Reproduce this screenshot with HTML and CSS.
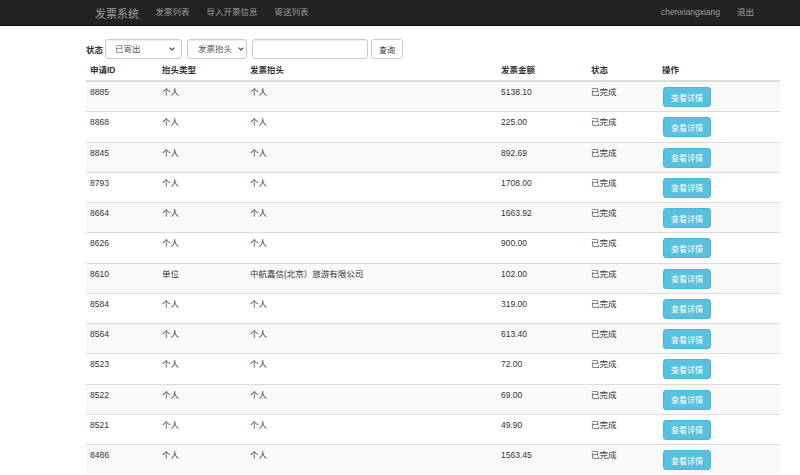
FILE: index.html
```html
<!DOCTYPE html>
<html lang="zh">
<head>
<meta charset="utf-8">
<title>发票系统</title>
<link rel="stylesheet" href="styles.css">
</head>
<body>
<nav class="navbar">
  <div class="nav-left">
    <span class="brand">发票系统</span>
    <a class="nav-link">发票列表</a>
    <a class="nav-link">导入开票信息</a>
    <a class="nav-link">寄送列表</a>
  </div>
  <div class="nav-right">
    <a class="nav-link">chenxiangxiang</a>
    <a class="nav-link">退出</a>
  </div>
</nav>
<main class="container">
  <form class="filter">
    <label class="filter-label">状态</label>
    <span class="select-wrap sel-status">
      <select class="select"><option>已寄出</option></select>
      <svg class="caret" width="6" height="4" viewBox="0 0 6 4"><path d="M0.6 0.6 L3 3 L5.4 0.6" fill="none" stroke="#444" stroke-width="1.1"/></svg>
    </span>
    <span class="select-wrap sel-title">
      <select class="select"><option>发票抬头</option></select>
      <svg class="caret" width="6" height="4" viewBox="0 0 6 4"><path d="M0.6 0.6 L3 3 L5.4 0.6" fill="none" stroke="#444" stroke-width="1.1"/></svg>
    </span>
    <input class="text-input" type="text">
    <button class="btn-query" type="button">查询</button>
  </form>
  <table class="table">
    <colgroup>
      <col class="c1"><col class="c2"><col class="c3"><col class="c4"><col class="c5"><col class="c6">
    </colgroup>
    <thead>
      <tr><th>申请ID</th><th>抬头类型</th><th>发票抬头</th><th>发票金额</th><th>状态</th><th>操作</th></tr>
    </thead>
    <tbody>
      <tr><td>8885</td><td>个人</td><td>个人</td><td>5138.10</td><td>已完成</td><td><button class="btn-info" type="button">查看详情</button></td></tr>
      <tr><td>8868</td><td>个人</td><td>个人</td><td>225.00</td><td>已完成</td><td><button class="btn-info" type="button">查看详情</button></td></tr>
      <tr><td>8845</td><td>个人</td><td>个人</td><td>892.69</td><td>已完成</td><td><button class="btn-info" type="button">查看详情</button></td></tr>
      <tr><td>8793</td><td>个人</td><td>个人</td><td>1708.00</td><td>已完成</td><td><button class="btn-info" type="button">查看详情</button></td></tr>
      <tr><td>8664</td><td>个人</td><td>个人</td><td>1663.92</td><td>已完成</td><td><button class="btn-info" type="button">查看详情</button></td></tr>
      <tr><td>8626</td><td>个人</td><td>个人</td><td>900.00</td><td>已完成</td><td><button class="btn-info" type="button">查看详情</button></td></tr>
      <tr><td>8610</td><td>单位</td><td>中航嘉信(北京）旅游有限公司</td><td>102.00</td><td>已完成</td><td><button class="btn-info" type="button">查看详情</button></td></tr>
      <tr><td>8584</td><td>个人</td><td>个人</td><td>319.00</td><td>已完成</td><td><button class="btn-info" type="button">查看详情</button></td></tr>
      <tr><td>8564</td><td>个人</td><td>个人</td><td>613.40</td><td>已完成</td><td><button class="btn-info" type="button">查看详情</button></td></tr>
      <tr><td>8523</td><td>个人</td><td>个人</td><td>72.00</td><td>已完成</td><td><button class="btn-info" type="button">查看详情</button></td></tr>
      <tr><td>8522</td><td>个人</td><td>个人</td><td>69.00</td><td>已完成</td><td><button class="btn-info" type="button">查看详情</button></td></tr>
      <tr><td>8521</td><td>个人</td><td>个人</td><td>49.90</td><td>已完成</td><td><button class="btn-info" type="button">查看详情</button></td></tr>
      <tr><td>8486</td><td>个人</td><td>个人</td><td>1563.45</td><td>已完成</td><td><button class="btn-info" type="button">查看详情</button></td></tr>
    </tbody>
  </table>
</main>
</body>
</html>
```
FILE: styles.css
```css
html { overflow: hidden; }
body {
  margin: 0;
  font-family: "Liberation Sans", "Noto Sans CJK SC", sans-serif;
  font-size: 8.5px;
  color: #333;
  background: #fff;
}
.navbar {
  height: 25px;
  background: #222;
  border-bottom: 1px solid #080808;
  display: flex;
  justify-content: space-between;
  align-items: center;
  padding: 0 38px 0 95px;
}
.nav-left, .nav-right { display: flex; align-items: center; }
.brand {
  font-size: 11px;
  color: #9d9d9d;
  margin-right: 8px;
}
.nav-link {
  color: #9d9d9d;
  padding: 0 8.5px;
  line-height: 25px;
}
.nav-right .nav-link:last-child { padding-right: 8px; }
.container {
  padding: 0 20px 0 86px;
}
.filter {
  display: flex;
  align-items: center;
  margin-top: 13px;
  height: 20px;
}
.filter-label {
  font-weight: bold;
  margin-right: 2px;
}
.select-wrap {
  position: relative;
  display: inline-block;
  height: 20px;
  margin-right: 5px;
}
.select {
  -webkit-appearance: none;
  appearance: none;
  height: 20px;
  box-sizing: border-box;
  border: 1px solid #ccc;
  border-radius: 3px;
  background: #fff;
  color: #555;
  font-family: inherit;
  font-size: 8.5px;
  padding: 0 0 0 9px;
  box-shadow: inset 0 1px 1px rgba(0,0,0,.075);
}
.sel-status .select { width: 77px; }
.sel-title .select { width: 60px; padding-left: 10px; }
.caret {
  position: absolute;
  top: 8px;
  pointer-events: none;
}
.sel-status .caret { right: 7px; }
.sel-title .caret { right: 3px; }
.text-input {
  width: 116px;
  height: 20px;
  box-sizing: border-box;
  border: 1px solid #ccc;
  border-radius: 3px;
  margin: 0 3px 0 0;
  padding: 0 6px;
  box-shadow: inset 0 1px 1px rgba(0,0,0,.075);
}
.btn-query {
  height: 20px;
  width: 32px;
  box-sizing: border-box;
  border: 1px solid #ccc;
  border-radius: 3px;
  background: #fff;
  color: #333;
  font-family: inherit;
  font-size: 8px;
  padding: 0;
}
.table {
  width: 694px;
  border-collapse: collapse;
  table-layout: fixed;
}
.c1 { width: 72px; }
.c2 { width: 88px; }
.c3 { width: 251px; }
.c4 { width: 90px; }
.c5 { width: 71px; }
.c6 { width: 122px; }
.table th {
  text-align: left;
  font-weight: bold;
  padding: 5px 5px 4px 4px;
  line-height: 12px;
  border-bottom: 2px solid #ddd;
}
.table td {
  padding: 5px 5px 4.25px 4px;
  line-height: 11px;
  vertical-align: top;
  border-top: 1px solid #ddd;
}
.table tbody tr:nth-child(odd) { background: #f9f9f9; }
.btn-info {
  display: block;
  height: 20px;
  width: 48px;
  box-sizing: border-box;
  padding: 0;
  background: #5bc0de;
  border: 1px solid #46b8da;
  border-radius: 3px;
  color: #fff;
  font-family: inherit;
  font-size: 8px;
  margin-left: 1px;
}
```
